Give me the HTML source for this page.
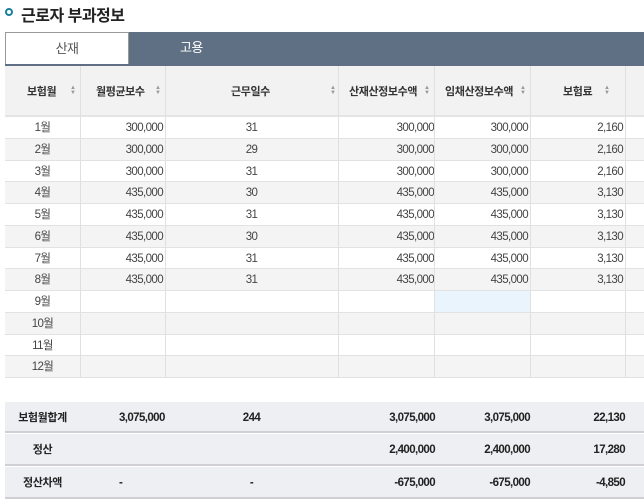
<!DOCTYPE html>
<html><head><meta charset="utf-8"><style>
*{margin:0;padding:0;box-sizing:border-box}
body{width:644px;height:503px;background:#fff;font-family:"Liberation Sans","Noto Sans CJK KR",sans-serif;position:relative;overflow:hidden;color:#333}
.a{position:absolute}
.t{font-size:11.5px;white-space:nowrap;line-height:14px;letter-spacing:-0.6px}
.h{font-size:11px;letter-spacing:-0.4px}
</style></head><body>
<div class="a" style="left:5px;top:8px;width:8px;height:8px;border:2px solid #1a7f9a;border-radius:50%"></div>
<div class="a" style="left:21px;top:2px;font-size:16px;font-weight:bold;color:#222;letter-spacing:-0.5px">근로자 부과정보</div>
<div class="a" style="left:5px;top:32px;width:124px;height:34px;border:1px solid #999;border-bottom:none;background:#fff"></div>
<div class="a t" style="left:5px;top:42px;width:124px;text-align:center;font-size:13px;color:#555">산재</div>
<div class="a" style="left:129px;top:32px;width:515px;height:34px;background:#5f6f84"></div>
<div class="a t" style="left:180px;top:41px;font-size:13px;color:#fff">고용</div>
<div class="a" style="left:5px;top:64px;width:639px;height:2px;background:#5f6f84"></div>
<div id="g"></div>
<script>
var cols=[5,80,165,338,434,530,625,644];
var h='';
h+='<div class="a" style="left:5px;top:66px;width:639px;height:50px;background:#f2f2f2"></div>';
h+='<div class="a" style="left:5px;top:115px;width:639px;height:2px;background:#e4e4e4"></div>';
var hd=[['보험월',27,70],['월평균보수',96,155],['근무일수',231,330],['산재산정보수액',349,424],['임채산정보수액',445,520],['보험료',563,604]];
for(var i=0;i<6;i++){
h+='<div class="a t h" style="left:'+hd[i][1]+'px;top:85px;font-weight:bold;color:#333">'+hd[i][0]+'</div>';
h+='<div class="a" style="left:'+hd[i][2]+'px;top:86px;font-size:6px;color:#999;line-height:5px">▲<br>▼</div>';}
var d=[['300,000','31','300,000','300,000','2,160'],['300,000','29','300,000','300,000','2,160'],['300,000','31','300,000','300,000','2,160'],['435,000','30','435,000','435,000','3,130'],['435,000','31','435,000','435,000','3,130'],['435,000','30','435,000','435,000','3,130'],['435,000','31','435,000','435,000','3,130'],['435,000','31','435,000','435,000','3,130']];
for(var r=0;r<12;r++){var y=117+r*21.75;
h+='<div class="a" style="left:5px;top:'+y+'px;width:639px;height:21.75px;background:'+(r%2?'#f4f4f4':'#fff')+';border-bottom:1px solid #e2e2e2"></div>';
if(r==8)h+='<div class="a" style="left:434px;top:'+y+'px;width:96px;height:21px;background:#eaf4fd"></div>';
h+='<div class="a t" style="left:5px;width:75px;text-align:center;top:'+(y+4)+'px;color:#444">'+(r+1)+'월</div>';
if(r<8){var v=d[r];
h+='<div class="a t" style="left:80px;width:83px;text-align:right;top:'+(y+4)+'px;color:#444">'+v[0]+'</div>';
h+='<div class="a t" style="left:165px;width:173px;text-align:center;top:'+(y+4)+'px;color:#444">'+v[1]+'</div>';
h+='<div class="a t" style="left:338px;width:96px;text-align:right;top:'+(y+4)+'px;color:#444">'+v[2]+'</div>';
h+='<div class="a t" style="left:434px;width:94px;text-align:right;top:'+(y+4)+'px;color:#444">'+v[3]+'</div>';
h+='<div class="a t" style="left:530px;width:93px;text-align:right;top:'+(y+4)+'px;color:#444">'+v[4]+'</div>';}
}
for(var i=1;i<7;i++)h+='<div class="a" style="left:'+cols[i]+'px;top:66px;width:1px;height:311px;background:#e0e0e0"></div>';
var s=[['보험월합계','3,075,000','244','3,075,000','3,075,000','22,130',402,31],['정산','','','2,400,000','2,400,000','17,280',434,32],['정산차액','-','-','-675,000','-675,000','-4,850',467,32]];
for(var k=0;k<3;k++){var q=s[k],y=q[6];
h+='<div class="a" style="left:5px;top:'+y+'px;width:639px;height:'+q[7]+'px;background:#eeeff3;border-bottom:2px solid #d0d0d4"></div>';
var ty=y+9;
h+='<div class="a t h" style="left:5px;width:75px;text-align:center;top:'+ty+'px;font-weight:bold;color:#222">'+q[0]+'</div>';
h+='<div class="a t" style="left:119px;top:'+ty+'px;font-weight:bold;color:#222">'+q[1]+'</div>';
h+='<div class="a t" style="left:165px;width:173px;text-align:center;top:'+ty+'px;font-weight:bold;color:#222">'+q[2]+'</div>';
h+='<div class="a t" style="left:338px;width:97px;text-align:right;top:'+ty+'px;font-weight:bold;color:#222">'+q[3]+'</div>';
h+='<div class="a t" style="left:434px;width:96px;text-align:right;top:'+ty+'px;font-weight:bold;color:#222">'+q[4]+'</div>';
h+='<div class="a t" style="left:530px;width:95px;text-align:right;top:'+ty+'px;font-weight:bold;color:#222">'+q[5]+'</div>';}
document.getElementById('g').innerHTML=h;
</script>
</body></html>
